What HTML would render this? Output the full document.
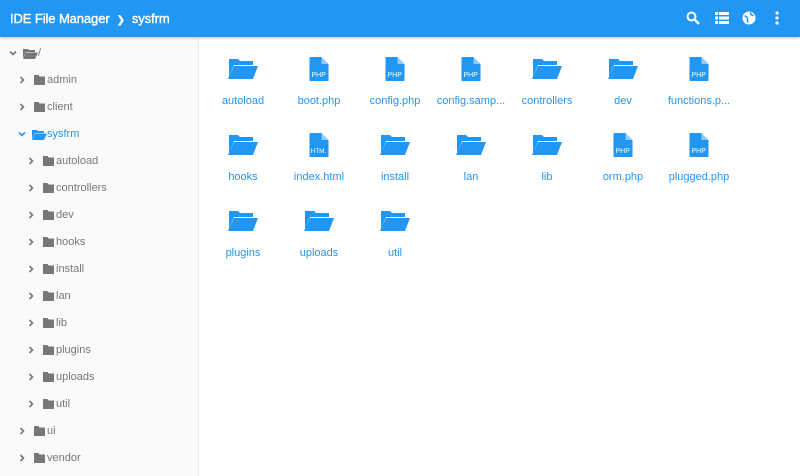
<!DOCTYPE html>
<html><head><meta charset="utf-8"><style>
*{margin:0;padding:0;box-sizing:border-box}
body{width:800px;height:476px;overflow:hidden;font-family:"Liberation Sans",sans-serif;background:#fff;position:relative}
.hdr{position:absolute;left:0;top:0;width:800px;height:37px;background:#2196f3;color:#fff;box-shadow:0 1px 3px rgba(0,0,0,.25);z-index:2}
.hdr .t{position:absolute;left:10px;top:11px;font-size:13px;-webkit-text-stroke:0.4px #fff;letter-spacing:-0.1px}
.side{position:absolute;left:0;top:37px;width:199px;height:439px;background:#fafafa;border-right:1px solid #eee}
.row{position:absolute;height:16px;font-size:11px;color:#777;display:flex;align-items:center}
.row.a{color:#2196f3}
.row svg{flex:none}
.it{position:absolute;width:76px;text-align:center;font-size:11px;color:#2196f3}
.it svg{position:absolute;left:50%;transform:translateX(-50%)}
.it span{position:absolute;left:0;right:0;top:38px;white-space:nowrap}
</style></head><body>
<div class="hdr"><div class="t">IDE File Manager &nbsp;<span style="font-size:10px">&#10095;</span>&nbsp; sysfrm</div>
<svg style="position:absolute;left:686px;top:11px" width="14" height="14" viewBox="0 0 14 14"><circle cx="5.5" cy="5.5" r="4" fill="none" stroke="#fff" stroke-width="2"/><path d="M8.5 8.5L13 13" stroke="#fff" stroke-width="2.5"/></svg>
<svg style="position:absolute;left:715px;top:12px" width="14" height="12" viewBox="0 0 14 12"><g fill="#fff"><rect x="0" y="0" width="3" height="3"/><rect x="4" y="0" width="10" height="3"/><rect x="0" y="4.5" width="3" height="3"/><rect x="4" y="4.5" width="10" height="3"/><rect x="0" y="9" width="3" height="3"/><rect x="4" y="9" width="10" height="3"/></g></svg>
<svg style="position:absolute;left:742px;top:11px" width="14" height="14" viewBox="0 0 14 14"><circle cx="7" cy="7" r="6.5" fill="#fff"/><path d="M2.5 5c1.5 0 2.5 1 3 2.5s-0.5 2 0.5 4M9 1.5c-1 1.5 0.5 3 2.5 3" stroke="#2196f3" stroke-width="1.6" fill="none"/></svg>
<svg style="position:absolute;left:775px;top:11px" width="4" height="14" viewBox="0 0 4 14"><g fill="#fff"><circle cx="2" cy="2" r="1.6"/><circle cx="2" cy="7" r="1.6"/><circle cx="2" cy="12" r="1.6"/></g></svg>
</div>
<div class="side">
<div id="tree"></div>
</div>
<div id="grid"></div>
<script>
var tree=[[0,'/',1,1,0],[1,'admin',0,0,0],[1,'client',0,0,0],[1,'sysfrm',1,1,1],[2,'autoload'],[2,'controllers'],[2,'dev'],[2,'hooks'],[2,'install'],[2,'lan'],[2,'lib'],[2,'plugins'],[2,'uploads'],[2,'util'],[1,'ui'],[1,'vendor']];
var h='';
tree.forEach(function(r,i){var x=[9,18,27][r[0]];var y=45+27*i-37;var open=r[2],act=r[4];var c=act?'#2196f3':'#777';
var arr=open?'<svg width="8" height="8" viewBox="0 0 8 8"><path d="M1 2.5L4 5.5L7 2.5" stroke="'+c+'" stroke-width="1.6" fill="none"/></svg>':'<svg width="8" height="8" viewBox="0 0 8 8"><path d="M2.5 1L5.5 4L2.5 7" stroke="'+c+'" stroke-width="1.6" fill="none"/></svg>';
var fo=open?'<svg width="15" height="11" viewBox="0 0 15 11"><path d="M0 1h5l1 1h6v2H3L0 10z" fill="'+c+'"/><path d="M3 4.5h12L12 11H0z" fill="'+c+'"/></svg>':'<svg width="11" height="10" viewBox="0 0 11 10"><path d="M0 0h4.5l1 1.5H11V10H0z" fill="'+c+'"/></svg>';
h+='<div class="row'+(act?' a':'')+'" style="left:'+x+'px;top:'+y+'px">'+arr+'<span style="width:'+(open?6:8)+'px"></span>'+fo+'<span style="width:'+(open?0:2)+'px"></span>'+r[1]+'</div>';});
document.getElementById('tree').innerHTML=h;
var items=[['autoload','f'],['boot.php','PHP'],['config.php','PHP'],['config.samp...','PHP'],['controllers','f'],['dev','f'],['functions.p...','PHP'],['hooks','f'],['index.html','HTM.'],['install','f'],['lan','f'],['lib','f'],['orm.php','PHP'],['plugged.php','PHP'],['plugins','f'],['uploads','f'],['util','f']];
var g='';
items.forEach(function(it,i){var col=i%7,row=Math.floor(i/7);var x=205+76*col,y=57+76*row;var ic;
if(it[1]=='f')ic='<svg style="top:1px" width="30" height="21" viewBox="0 0 30 21"><path d="M1 1h9l2 2h13v4H6L1 19z" fill="#2196f3"/><path d="M6 8h24l-5 13H0z" fill="#2196f3"/></svg>';
else ic='<svg width="19" height="24" viewBox="0 0 19 24"><path d="M0 0h12l7 7v17H0z" fill="#2196f3"/><path d="M12 0v7h7" fill="#fff" opacity=".5"/><text x="'+(it[1]=='PHP'?2:1)+'" y="20" font-size="'+(it[1]=='PHP'?7:6.5)+'" fill="#fff" font-family="Liberation Sans">'+it[1]+'</text></svg>';
g+='<div class="it" style="left:'+x+'px;top:'+y+'px">'+ic+'<span>'+it[0]+'</span></div>';});
document.getElementById('grid').innerHTML=g;
</script>
</body></html>
